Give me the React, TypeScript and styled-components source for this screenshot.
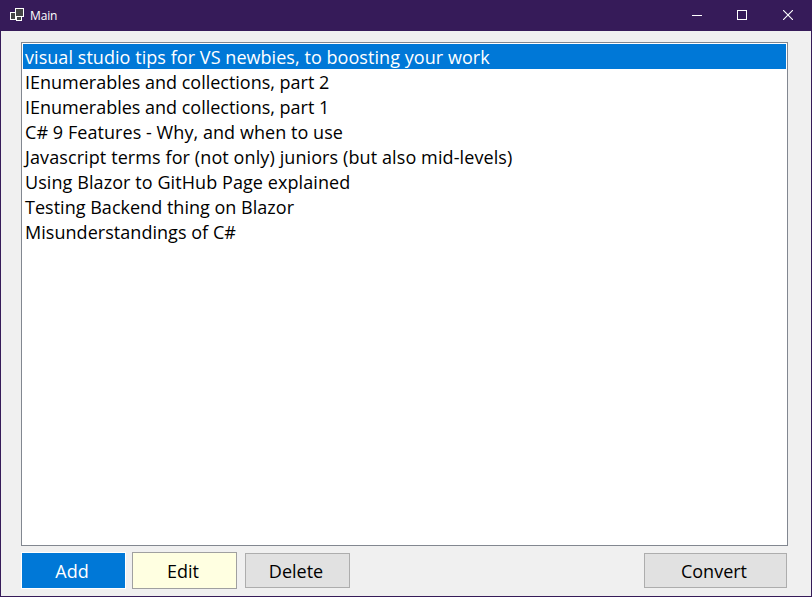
import React, { useState } from 'react';
import styled, { createGlobalStyle } from 'styled-components';

const GlobalStyle = createGlobalStyle`
  body { margin: 0; overflow: hidden; }
  *, *::before, *::after { box-sizing: border-box; }
`;

const Window = styled.div`
  display: flex;
  flex-direction: column;
  width: 812px;
  height: 597px;
  border: 1px solid #361b59;
  border-top: 0;
  background: #f0f0f0;
  color: #000;
  font-family: 'Open Sans', 'Segoe UI', sans-serif;
`;

const TitleBar = styled.header`
  display: flex;
  align-items: center;
  height: 31px;
  flex: none;
  padding-left: 8px;
  background: #361b59;
  color: #fff;
`;

const AppMark = styled.svg`
  margin-top: 1px;
`;

const Title = styled.h1`
  flex: 1;
  margin: 0 0 0 5px;
  font-size: 12px;
  font-weight: 400;
  line-height: 16px;
  letter-spacing: -0.15px;
`;

const CaptionButton = styled.button<{ $nudge?: number }>`
  display: flex;
  align-items: center;
  justify-content: center;
  width: 46px;
  height: 31px;
  padding: 0 0 1px ${(p) => p.$nudge ?? 0}px;
  border: 0;
  background: transparent;
  color: #fff;
`;

const Content = styled.main`
  display: flex;
  flex-direction: column;
  flex: 1;
  padding: 11px 23px 0 20px;
`;

const ListBox = styled.ul`
  width: 767px;
  height: 504px;
  margin: 0;
  padding: 1px;
  border: 1px solid #828790;
  background: #fff;
  list-style: none;
`;

const Item = styled.li<{ $selected: boolean; $tracking: number }>`
  height: 25px;
  padding-left: 2px;
  background: ${(p) => (p.$selected ? '#0078d7' : 'transparent')};
  color: ${(p) => (p.$selected ? '#fff' : '#000')};
  font-size: 18px;
  line-height: 26px;
  letter-spacing: ${(p) => p.$tracking}px;
  white-space: nowrap;
  cursor: default;
`;

const Actions = styled.footer`
  display: flex;
  align-items: center;
  width: 767px;
  height: 37px;
  margin-top: 6px;
`;

const variants = {
  primary: 'height: 37px; background: #0078d7; border-color: #fff; color: #fff;',
  highlight: 'height: 37px; margin-left: 6px; background: #ffffe1; border-color: #a0a0a0;',
  plain: 'height: 35px; margin-left: 8px; background: #e1e1e1; border-color: #adadad;',
  trailing:
    'height: 35px; width: 143px; margin: 0 1px 0 auto; background: #e1e1e1; border-color: #adadad;',
};

const Button = styled.button<{ $variant: keyof typeof variants }>`
  width: 105px;
  padding: 0 3px 0 0;
  border: 1px solid;
  color: #000;
  font-family: inherit;
  font-size: 18px;
  line-height: 26px;
  ${(p) => variants[p.$variant]}
`;

const AppIcon = () => (
  <AppMark width="16" height="16" viewBox="0 0 16 16" shapeRendering="crispEdges">
    <path d="M1.5 4.5h5v7h-5z" fill="#444" stroke="#fff" />
    <path d="M7.5 8.5h5v4h-5z" fill="#444" stroke="#fff" />
    <path d="M6.5 0.5h8v8h-8z" fill="#444" stroke="#fff" />
  </AppMark>
);

const MinimizeIcon = () => (
  <svg width="10" height="10" viewBox="0 0 10 10" shapeRendering="crispEdges">
    <path d="M0 5.5h10" stroke="currentColor" />
  </svg>
);

const MaximizeIcon = () => (
  <svg width="10" height="10" viewBox="0 0 10 10" shapeRendering="crispEdges">
    <path d="M0.5 0.5h9v9h-9z" fill="none" stroke="currentColor" />
  </svg>
);

const CloseIcon = () => (
  <svg width="10" height="10" viewBox="0 0 10 10">
    <path d="M0 0l10 10M10 0L0 10" stroke="currentColor" strokeWidth="1.1" />
  </svg>
);

const posts = [
  { title: 'visual studio tips for VS newbies, to boosting your work', tracking: 0.054 },
  { title: 'IEnumerables and collections, part 2', tracking: -0.01 },
  { title: 'IEnumerables and collections, part 1', tracking: -0.01 },
  { title: 'C# 9 Features - Why, and when to use', tracking: 0.06 },
  { title: 'Javascript terms for (not only) juniors (but also mid-levels)', tracking: 0.1 },
  { title: 'Using Blazor to GitHub Page explained', tracking: 0.08 },
  { title: 'Testing Backend thing on Blazor', tracking: 0.02 },
  { title: 'Misunderstandings of C#', tracking: 0.04 },
];

export default function App() {
  const [selected, setSelected] = useState(0);

  return (
    <Window>
      <GlobalStyle />
      <TitleBar>
        <AppIcon />
        <Title>Main</Title>
        <CaptionButton $nudge={2} aria-label="Minimize"><MinimizeIcon /></CaptionButton>
        <CaptionButton aria-label="Maximize"><MaximizeIcon /></CaptionButton>
        <CaptionButton aria-label="Close"><CloseIcon /></CaptionButton>
      </TitleBar>
      <Content>
        <ListBox>
          {posts.map((post, i) => (
            <Item
              key={post.title}
              $selected={i === selected}
              $tracking={post.tracking}
              onClick={() => setSelected(i)}
            >
              {post.title}
            </Item>
          ))}
        </ListBox>
        <Actions>
          <Button $variant="primary">Add</Button>
          <Button $variant="highlight">Edit</Button>
          <Button $variant="plain">Delete</Button>
          <Button $variant="trailing">Convert</Button>
        </Actions>
      </Content>
    </Window>
  );
}
